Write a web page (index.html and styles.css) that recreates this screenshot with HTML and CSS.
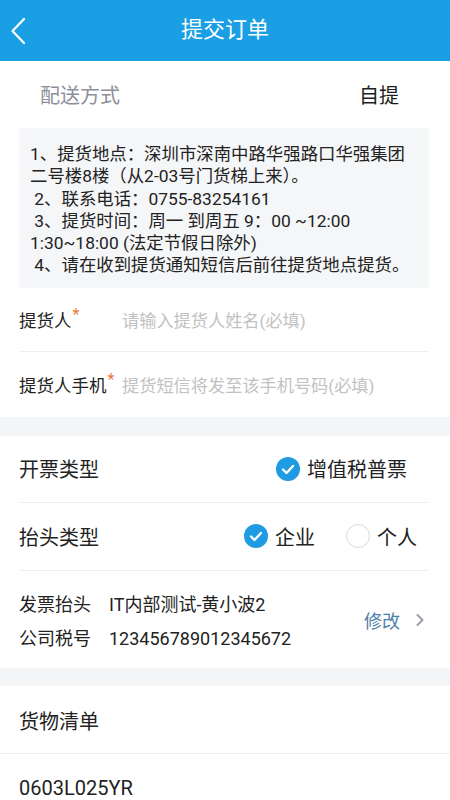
FILE: index.html
```html
<!DOCTYPE html>
<html lang="zh-CN">
<head>
<meta charset="utf-8">
<title>提交订单</title>
<link rel="stylesheet" href="styles.css">
</head>
<body>
<header class="topbar">
  <div class="back">
    <svg width="16" height="28" viewBox="0 0 16 28"><path d="M14 2 L2.5 14 L14 26" fill="none" stroke="#fff" stroke-width="2.2" stroke-linecap="round" stroke-linejoin="round"/></svg>
  </div>
  <h1 class="title">提交订单</h1>
  <div></div>
</header>

<section class="delivery">
  <span class="delivery-label">配送方式</span>
  <span class="delivery-value">自提</span>
</section>

<div class="info">1、提货地点：深圳市深南中路华强路口华强集团
二号楼8楼（从2-03号门货梯上来）。
 2、联系电话：0755-83254161
 3、提货时间：周一 到周五 9：00 ~12:00
1:30~18:00 (法定节假日除外)
 4、请在收到提货通知短信后前往提货地点提货。</div>

<section class="form">
  <div class="field field-first">
    <span class="field-label">提货人<sup class="req">*</sup></span>
    <span class="placeholder">请输入提货人姓名(必填)</span>
  </div>
  <div class="field">
    <span class="field-label">提货人手机<sup class="req">*</sup></span>
    <span class="placeholder">提货短信将发至该手机号码(必填)</span>
  </div>
</section>

<div class="gap"></div>

<section class="invoice">
  <div class="row row-line row-type">
    <span class="row-label">开票类型</span>
    <div class="options">
      <span class="opt"><span class="check on"><svg width="24" height="24" viewBox="0 0 24 24"><path d="M7 12.5 L10.5 16 L17 9" fill="none" stroke="#fff" stroke-width="2.4" stroke-linecap="round" stroke-linejoin="round"/></svg></span>增值税普票</span>
    </div>
  </div>
  <div class="row row-line row-head">
    <span class="row-label">抬头类型</span>
    <div class="options">
      <span class="opt"><span class="check on"><svg width="24" height="24" viewBox="0 0 24 24"><path d="M7 12.5 L10.5 16 L17 9" fill="none" stroke="#fff" stroke-width="2.4" stroke-linecap="round" stroke-linejoin="round"/></svg></span>企业</span>
      <span class="opt"><span class="check off"></span>个人</span>
    </div>
  </div>
  <div class="title-info">
    <div class="kv">
      <span class="k">发票抬头</span><span class="v">IT内部测试-黄小波2</span>
      <span class="k">公司税号</span><span class="v">123456789012345672</span>
    </div>
    <div class="edit">
      <span>修改</span>
      <svg width="10" height="16" viewBox="0 0 10 16"><path d="M2.5 3 L7.5 8 L2.5 13" fill="none" stroke="#9a9ea6" stroke-width="2" stroke-linecap="round" stroke-linejoin="round"/></svg>
    </div>
  </div>
</section>

<div class="gap gap2"></div>

<section class="goods">
  <div class="goods-head">货物清单</div>
  <div class="goods-item">0603L025YR</div>
</section>
</body>
</html>
```

FILE: styles.css
```css
* { box-sizing: border-box; }
html, body { margin: 0; padding: 0; }
body {
  width: 450px;
  background: #ffffff;
  font-family: Roboto, "Noto Sans CJK SC", "Noto Sans", sans-serif;
  color: #222222;
  overflow: hidden;
}

.topbar {
  height: 61px;
  background: #1b9fe4;
  display: grid;
  grid-template-columns: 1fr auto 1fr;
  align-items: center;
}
.back {
  padding-left: 10px;
  display: flex;
  align-items: center;
}
.title {
  margin: 0;
  font-size: 22px;
  font-weight: 400;
  color: #ffffff;
  line-height: 1;
  padding-bottom: 1px;
}

.delivery {
  height: 67px;
  display: flex;
  align-items: center;
  justify-content: space-between;
  padding: 0 51px 0 40px;
}
.delivery-label {
  font-size: 20px;
  color: #8b9099;
}
.delivery-value {
  font-size: 20px;
  color: #1e1e1e;
}

.info {
  margin: 0 21px 0 19px;
  background: #f5f6f8;
  padding: 15px 8px 11px 11px;
  font-size: 17.4px;
  line-height: 22.3px;
  color: #222222;
  white-space: pre-wrap;
}

.form {
  padding: 0 21px 0 19px;
}
.field {
  display: flex;
  align-items: center;
  height: 65px;
}
.field-first {
  height: 64px;
  border-bottom: 1px solid #efefef;
}
.field-label {
  width: 103px;
  font-size: 17.5px;
  color: #222222;
  white-space: nowrap;
}
.req {
  color: #e8793a;
  font-size: 16px;
  vertical-align: 0;
  position: relative;
  top: -7px;
  margin-left: 1px;
}
.placeholder {
  font-size: 17.2px;
  color: #c2c2c2;
}

.gap {
  height: 19px;
  background: #f4f5f7;
}
.gap2 { height: 18px; }

.invoice {
  padding: 0 21px 0 19px;
}
.row {
  display: flex;
  align-items: center;
  justify-content: space-between;
  height: 68px;
}
.row-type { height: 67px; }
.row-line { border-bottom: 1px solid #efefef; }
.row-label {
  font-size: 20px;
  color: #222222;
}
.options {
  display: flex;
  align-items: center;
  gap: 31px;
}
.opt {
  display: flex;
  align-items: center;
  gap: 7px;
  font-size: 20px;
  color: #222222;
}
.row-type .options { margin-right: 22px; }
.row-head .options { margin-right: 12px; }
.check {
  width: 24px;
  height: 24px;
  border-radius: 50%;
  display: inline-flex;
}
.check.on { background: #1e9be3; }
.check.off {
  background: #ffffff;
  border: 1px solid #dadada;
}

.title-info {
  height: 97px;
  display: flex;
  align-items: center;
  justify-content: space-between;
}
.kv {
  display: grid;
  grid-template-columns: 90px auto;
  row-gap: 9px;
  font-size: 18px;
  line-height: 25px;
  color: #222222;
  padding-top: 4px;
}
.edit {
  display: flex;
  align-items: center;
  gap: 15px;
  font-size: 18px;
  color: #4d80a9;
  padding-right: 4px;
  padding-top: 2px;
}

.goods-head {
  height: 68px;
  display: flex;
  align-items: center;
  padding-left: 19px;
  font-size: 20px;
  color: #222222;
  border-bottom: 1px solid #efefef;
  padding-top: 3px;
}
.goods-item {
  padding: 22px 0 0 19px;
  font-size: 20px;
  color: #222222;
}
```
